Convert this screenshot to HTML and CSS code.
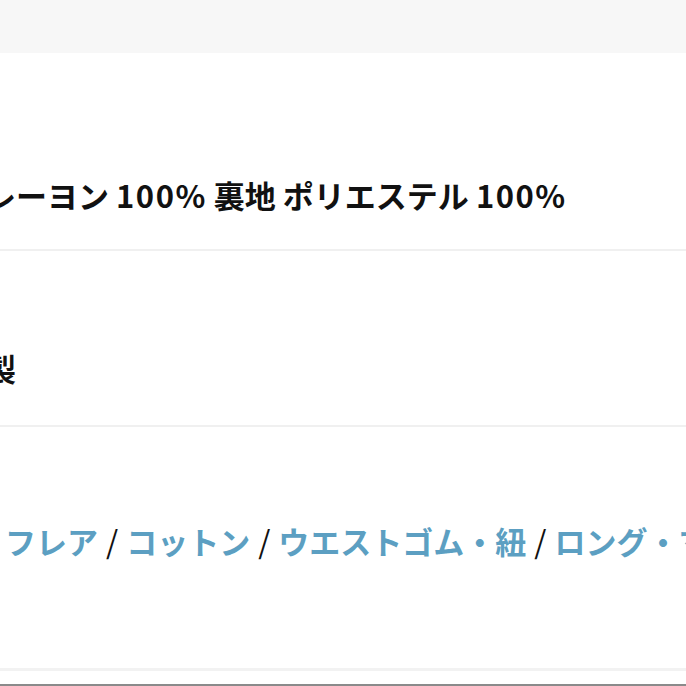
FILE: index.html
```html
<!DOCTYPE html>
<html lang="ja">
<head>
    <meta charset="UTF-8" />
    <title>商品詳細</title>
    <link rel="stylesheet" href="styles.css">
</head>
<body>
<div class="topbar"></div>

<div class="spec spec-material">
    <div class="spec-value">レーヨン <span class="num">100%</span> 裏地 ポリエステル <span class="num">100%</span></div>
</div>

<div class="spec spec-origin">
    <div class="spec-value">製</div>
</div>

<div class="spec spec-tags">
    <div class="tag-list">
        <a class="tag" href="#">フレア</a><span class="sep">/</span><a class="tag" href="#">コットン</a><span class="sep">/</span><a class="tag" href="#">ウエストゴム・紐</a><span class="sep">/</span><a class="tag" href="#">ロング・マキシ丈</a>
    </div>
</div>

<div class="footer"></div>
</body>
</html>
```

FILE: styles.css
```css
body {
    margin: 0;
    background-color: #fff;
    font-family: "Noto Sans CJK JP", "Noto Sans", sans-serif;
    color: #111;
    overflow: hidden;
}
.topbar {
    height: 53px;
    background-color: #f7f7f7;
}
.spec {
    white-space: nowrap;
    border-bottom: 2px solid #f0f0f0;
}
.spec-value, .tag-list {
    font-size: 31px;
    line-height: 42px;
    font-weight: 600;
}
.spec-value {
    margin-left: -15px;
}
.num {
    letter-spacing: 1.5px;
}
.spec-material {
    padding: 121px 0 33px;
}
.spec-origin {
    padding: 96px 0 36px;
}
.spec-tags {
    padding: 93px 0 106px;
    border-bottom: 3px solid #f2f2f2;
}
.tag-list {
    padding-left: 5px;
    color: #111;
}
.tag {
    color: #5c9fc2;
    text-decoration: none;
}
.sep {
    font-weight: 400;
    margin: 0 8px;
}
.footer {
    height: 13px;
    border-bottom: 2px solid #8a8a8a;
}
```
